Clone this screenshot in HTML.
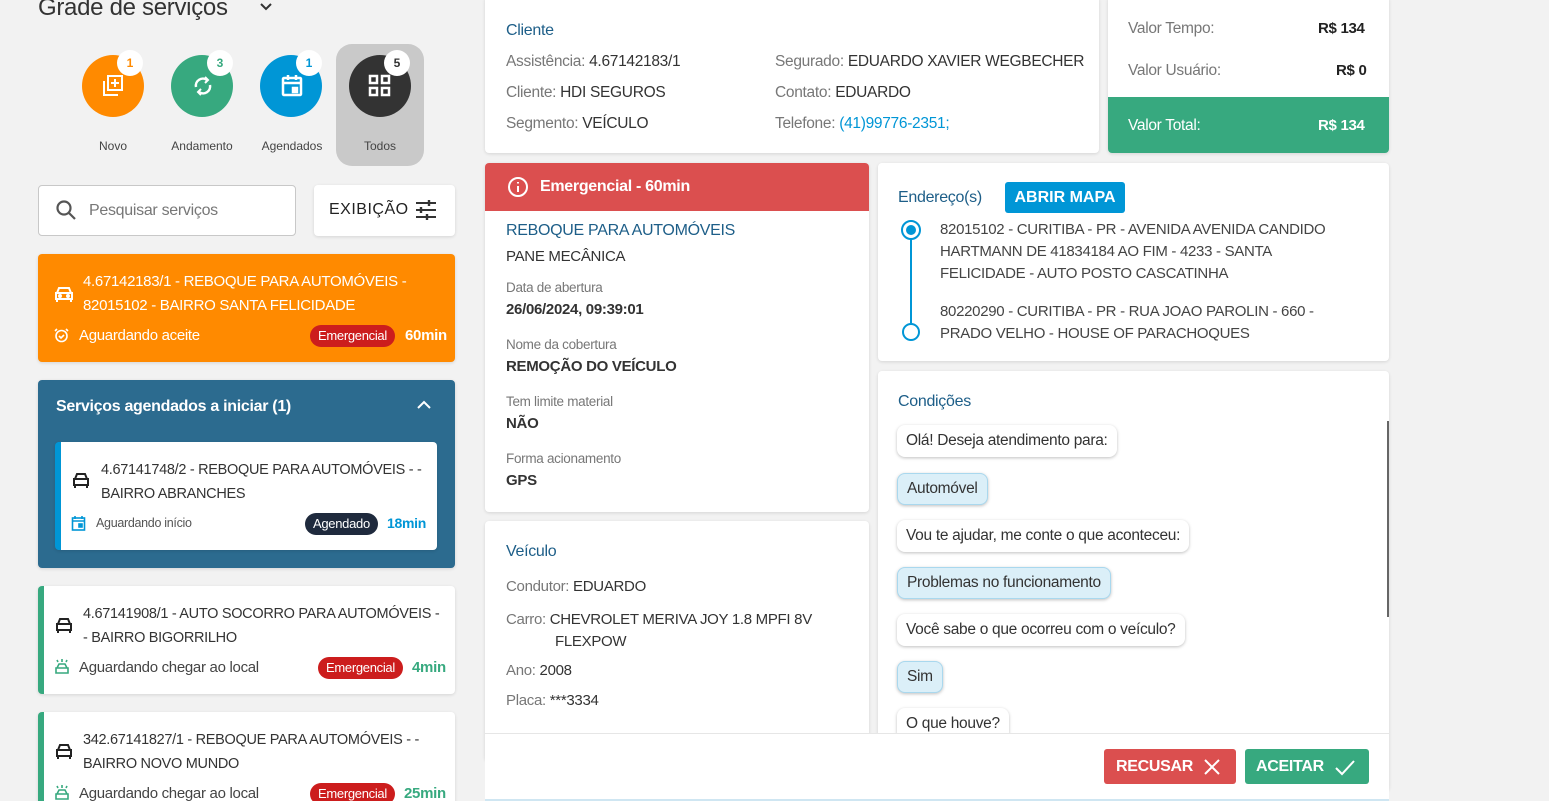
<!DOCTYPE html>
<html style="overflow:hidden;width:1549px;height:801px"><head><meta charset="utf-8"><style>
*{box-sizing:border-box;margin:0;padding:0}
body{width:1549px;height:801px;background:#f2f2f2;font-family:"Liberation Sans",sans-serif;color:#333;position:relative;overflow:hidden;font-size:15px}
.a{position:absolute}
.card{position:absolute;background:#fff;border-radius:4px;box-shadow:0 1px 3px rgba(0,0,0,.12)}
.circ{position:absolute;width:62px;height:62px;border-radius:50%;top:55px}
.badge{position:absolute;width:26px;height:26px;border-radius:50%;background:#fff;top:50px;font-size:12px;font-weight:bold;text-align:center;line-height:26px}
.lbl{position:absolute;top:139px;font-size:12px;color:#444;width:90px;text-align:center}
.t{position:absolute;white-space:nowrap;letter-spacing:-0.3px}
.g{color:#777}
.h{color:#1d5e88;font-size:16px}
.pill{position:absolute;height:22px;border-radius:11px;color:#fff;font-size:13px;line-height:22px;padding:0 8px;letter-spacing:-0.3px}
.bub{position:absolute;left:897px;height:32px;border-radius:8px;background:#fff;box-shadow:0 1px 3px rgba(0,0,0,.25);font-size:15.5px;line-height:32px;padding:0 9px;color:#333;white-space:nowrap;letter-spacing:-0.3px}
.bub.b{background:#dbeff8;border:1px solid #a9d8ee;line-height:30px}
</style></head><body>

<div class="t" style="left:38px;top:-6px;font-size:24px;color:#333">Grade de serviços</div>
<svg class="a" style="left:258px;top:1px" width="16" height="12"><path d="M3 3l5 5 5-5" stroke="#333" stroke-width="2" fill="none"/></svg>

<div class="a" style="left:336px;top:44px;width:88px;height:122px;background:#c9c9c9;border-radius:16px"></div>
<div class="circ" style="left:82px;background:#ff8a00"></div>
<div class="circ" style="left:171px;background:#37a97f"></div>
<div class="circ" style="left:260px;background:#0096d6"></div>
<div class="circ" style="left:349px;background:#333"></div>
<svg class="a" style="left:100px;top:73px" width="26" height="26" fill="none" stroke="#fff" stroke-width="2"><rect x="8" y="3" width="14" height="14"/><path d="M4 8v14h14M15 6v8M11 10h8"/></svg>
<svg class="a" style="left:190px;top:73px" width="26" height="26" fill="none" stroke="#fff" stroke-width="2.5"><path d="M6 14a7 7 0 0 1 11-7M20 12a7 7 0 0 1-11 7"/><path d="M15 4l3 3-3 3M11 16l-3 3 3 3" stroke-width="2"/></svg>
<svg class="a" style="left:279px;top:73px" width="26" height="26" fill="none" stroke="#fff" stroke-width="2.5"><rect x="4" y="5" width="18" height="17" rx="1"/><path d="M4 10h18M9 2v5M17 2v5"/><rect x="14" y="15" width="4" height="4" fill="#fff"/></svg>
<svg class="a" style="left:368px;top:74px" width="24" height="24" fill="none" stroke="#fff" stroke-width="2.5"><rect x="2" y="2" width="7" height="7"/><rect x="14" y="2" width="7" height="7"/><rect x="2" y="14" width="7" height="7"/><rect x="14" y="14" width="7" height="7"/></svg>
<div class="badge" style="left:117px;color:#ff8a00">1</div>
<div class="badge" style="left:207px;color:#37a97f">3</div>
<div class="badge" style="left:296px;color:#0096d6">1</div>
<div class="badge" style="left:384px;color:#333">5</div>
<div class="lbl" style="left:68px">Novo</div>
<div class="lbl" style="left:157px">Andamento</div>
<div class="lbl" style="left:247px">Agendados</div>
<div class="lbl" style="left:335px">Todos</div>

<div class="a" style="left:38px;top:185px;width:258px;height:51px;border:1px solid #c8c8c8;border-radius:4px;background:#fff"></div>
<svg class="a" style="left:55px;top:199px" width="22" height="22" fill="none" stroke="#555" stroke-width="2.2"><circle cx="9" cy="9" r="6.5"/><path d="M14 14l6 6"/></svg>
<div class="t" style="left:89px;top:202px;font-size:16px;color:#777">Pesquisar serviços</div>
<div class="card" style="left:314px;top:185px;width:141px;height:51px"></div>
<div class="t" style="left:329px;top:201px;font-size:16px;color:#222;letter-spacing:0.5px">EXIBIÇÃO</div>
<svg class="a" style="left:415px;top:199px" width="22" height="22" stroke="#333" stroke-width="2"><path d="M1 4h20M1 11h20M1 18h20"/><path d="M14 1v6M6 8v6M12 15v6" stroke-width="2.4"/></svg>

<div class="card" style="left:38px;top:254px;width:417px;height:108px;background:#ff8a00"></div>
<svg class="a" style="left:54px;top:285px" width="20" height="18" fill="none" stroke="#fff" stroke-width="2"><path d="M3 8l2-5h10l2 5M2 8h16v6H2zM3 14v3M17 14v3"/><circle cx="6" cy="11" r="1" fill="#fff"/><circle cx="14" cy="11" r="1" fill="#fff"/></svg>
<div class="t" style="left:83px;top:270px;color:#fff;line-height:24px">4.67142183/1 - REBOQUE PARA AUTOMÓVEIS -<br>82015102 - BAIRRO SANTA FELICIDADE</div>
<svg class="a" style="left:54px;top:328px" width="15" height="15" fill="none" stroke="#fff" stroke-width="1.6"><circle cx="7.5" cy="8" r="5.5"/><path d="M5 8l2 2 3-3M1 3l2-2M14 3l-2-2"/></svg>
<div class="t" style="left:79px;top:327px;color:#fff">Aguardando aceite</div>
<div class="pill" style="left:310px;top:325px;background:#cc1d1d">Emergencial</div>
<div class="t" style="left:405px;top:327px;color:#fff;font-weight:bold">60min</div>

<div class="card" style="left:38px;top:380px;width:417px;height:188px;background:#2c6b8f"></div>
<div class="t" style="left:56px;top:398px;color:#fff;font-size:16px;font-weight:bold">Serviços agendados a iniciar (1)</div>
<svg class="a" style="left:416px;top:399px" width="16" height="12"><path d="M2 9l6-6 6 6" stroke="#fff" stroke-width="2" fill="none"/></svg>
<div class="card" style="left:55px;top:442px;width:382px;height:108px;border-left:6px solid #0096d6"></div>
<svg class="a" style="left:72px;top:472px" width="18" height="17" fill="none" stroke="#222" stroke-width="2"><path d="M3 7l2-5h8l2 5M2 7h14v6H2zM3 13v3M15 13v3"/></svg>
<div class="t" style="left:101px;top:458px;color:#333;line-height:24px;font-size:14.5px">4.67141748/2 - REBOQUE PARA AUTOMÓVEIS - -<br>BAIRRO ABRANCHES</div>
<svg class="a" style="left:71px;top:515px" width="15" height="16" fill="none" stroke="#0096d6" stroke-width="1.6"><rect x="1.5" y="3" width="12" height="12"/><path d="M1.5 6h12M4 1v3M11 1v3"/><rect x="8" y="9" width="3" height="3" fill="#0096d6"/></svg>
<div class="t" style="left:96px;top:516px;font-size:12.5px;color:#555">Aguardando início</div>
<div class="pill" style="left:305px;top:513px;background:#1f2a3d">Agendado</div>
<div class="t" style="left:387px;top:515px;color:#0096d6;font-weight:bold;font-size:14px">18min</div>

<div class="card" style="left:38px;top:586px;width:417px;height:108px;border-left:6px solid #37a97f"></div>
<svg class="a" style="left:55px;top:617px" width="18" height="17" fill="none" stroke="#222" stroke-width="2"><path d="M3 7l2-5h8l2 5M2 7h14v6H2zM3 13v3M15 13v3"/></svg>
<div class="t" style="left:83px;top:602px;color:#333;line-height:24px;font-size:14.5px">4.67141908/1 - AUTO SOCORRO PARA AUTOMÓVEIS -<br>- BAIRRO BIGORRILHO</div>
<svg class="a" style="left:54px;top:658px" width="16" height="18" fill="none" stroke="#37a97f" stroke-width="1.6"><path d="M3 10l2-4h6l2 4M2 10h12v5H2zM8 1v3M3 2l1 2M13 2l-1 2"/></svg>
<div class="t" style="left:79px;top:659px;color:#444">Aguardando chegar ao local</div>
<div class="pill" style="left:318px;top:657px;background:#cc1d1d">Emergencial</div>
<div class="t" style="left:412px;top:659px;color:#37a97f;font-weight:bold">4min</div>

<div class="card" style="left:38px;top:712px;width:417px;height:108px;border-left:6px solid #37a97f"></div>
<svg class="a" style="left:55px;top:743px" width="18" height="17" fill="none" stroke="#222" stroke-width="2"><path d="M3 7l2-5h8l2 5M2 7h14v6H2zM3 13v3M15 13v3"/></svg>
<div class="t" style="left:83px;top:728px;color:#333;line-height:24px;font-size:14.5px">342.67141827/1 - REBOQUE PARA AUTOMÓVEIS - -<br>BAIRRO NOVO MUNDO</div>
<svg class="a" style="left:54px;top:784px" width="16" height="18" fill="none" stroke="#37a97f" stroke-width="1.6"><path d="M3 10l2-4h6l2 4M2 10h12v5H2zM8 1v3M3 2l1 2M13 2l-1 2"/></svg>
<div class="t" style="left:79px;top:785px;color:#444">Aguardando chegar ao local</div>
<div class="pill" style="left:310px;top:783px;background:#cc1d1d">Emergencial</div>
<div class="t" style="left:404px;top:785px;color:#37a97f;font-weight:bold">25min</div>

<!-- Cliente -->
<div class="card" style="left:485px;top:-4px;width:614px;height:157px"></div>
<div class="t h" style="left:506px;top:22px">Cliente</div>
<div class="t" style="left:506px;top:46px;line-height:31px;font-size:15.5px"><span class="g">Assistência:</span> 4.67142183/1<br><span class="g">Cliente:</span> HDI SEGUROS<br><span class="g">Segmento:</span> VEÍCULO</div>
<div class="t" style="left:775px;top:46px;line-height:31px;font-size:15.5px"><span class="g">Segurado:</span> EDUARDO XAVIER WEGBECHER<br><span class="g">Contato:</span> EDUARDO<br><span class="g">Telefone:</span> <span style="color:#0096d6">(41)99776-2351;</span></div>

<!-- Valor -->
<div class="card" style="left:1108px;top:-4px;width:281px;height:157px;overflow:hidden"><div class="a" style="left:0;top:101px;width:281px;height:56px;background:#37a97f"></div></div>
<div class="t g" style="left:1128px;top:20px;font-size:15.5px">Valor Tempo:</div>
<div class="t" style="left:1318px;top:20px;font-weight:bold;color:#222">R$ 134</div>
<div class="t g" style="left:1128px;top:62px;font-size:15.5px">Valor Usuário:</div>
<div class="t" style="left:1336px;top:62px;font-weight:bold;color:#222">R$ 0</div>
<div class="t" style="left:1128px;top:117px;color:#fff;font-size:15.5px">Valor Total:</div>
<div class="t" style="left:1318px;top:117px;color:#fff;font-weight:bold">R$ 134</div>

<!-- Emergencial card -->
<div class="card" style="left:485px;top:163px;width:384px;height:349px;overflow:hidden"><div style="height:48px;background:#db4f4f"></div></div>
<svg class="a" style="left:507px;top:176px" width="22" height="22" fill="none" stroke="#fff" stroke-width="2"><circle cx="11" cy="11" r="9"/><path d="M11 10v6M11 6v1.5"/></svg>
<div class="t" style="left:540px;top:178px;color:#fff;font-weight:bold;font-size:16px">Emergencial - 60min</div>
<div class="t" style="left:506px;top:222px;color:#1d5e88;font-size:16px">REBOQUE PARA AUTOMÓVEIS</div>
<div class="t" style="left:506px;top:248px">PANE MECÂNICA</div>
<div class="t g" style="left:506px;top:280px;font-size:13.5px">Data de abertura</div>
<div class="t" style="left:506px;top:301px;font-weight:bold;color:#333">26/06/2024, 09:39:01</div>
<div class="t g" style="left:506px;top:337px;font-size:13.5px">Nome da cobertura</div>
<div class="t" style="left:506px;top:358px;font-weight:bold;color:#333">REMOÇÃO DO VEÍCULO</div>
<div class="t g" style="left:506px;top:394px;font-size:13.5px">Tem limite material</div>
<div class="t" style="left:506px;top:415px;font-weight:bold;color:#333">NÃO</div>
<div class="t g" style="left:506px;top:451px;font-size:13.5px">Forma acionamento</div>
<div class="t" style="left:506px;top:472px;font-weight:bold;color:#333">GPS</div>

<!-- Veiculo -->
<div class="card" style="left:485px;top:521px;width:384px;height:240px"></div>
<div class="t h" style="left:506px;top:543px">Veículo</div>
<div class="t" style="left:506px;top:578px"><span class="g">Condutor:</span> EDUARDO</div>
<div class="t" style="left:506px;top:609px;line-height:22px"><span class="g">Carro:</span> CHEVROLET MERIVA JOY 1.8 MPFI 8V<br><span style="padding-left:49px">FLEXPOW</span></div>
<div class="t" style="left:506px;top:662px"><span class="g">Ano:</span> 2008</div>
<div class="t" style="left:506px;top:692px"><span class="g">Placa:</span> ***3334</div>

<!-- Endereço -->
<div class="card" style="left:878px;top:163px;width:511px;height:198px"></div>
<div class="t h" style="left:898px;top:189px">Endereço(s)</div>
<div class="a" style="left:1005px;top:182px;width:120px;height:31px;background:#0096d6;border-radius:3px;color:#fff;font-weight:bold;font-size:16px;text-align:center;line-height:31px">ABRIR MAPA</div>
<svg class="a" style="left:898px;top:217px" width="26" height="126" fill="none" stroke="#0096d6" stroke-width="2"><circle cx="13" cy="13" r="9"/><circle cx="13" cy="13" r="5" fill="#0096d6" stroke="none"/><path d="M13 22v84"/><circle cx="13" cy="115" r="8"/></svg>
<div class="t" style="left:940px;top:219px;line-height:22px;color:#444">82015102 - CURITIBA - PR - AVENIDA AVENIDA CANDIDO<br>HARTMANN DE 41834184 AO FIM - 4233 - SANTA<br>FELICIDADE - AUTO POSTO CASCATINHA</div>
<div class="t" style="left:940px;top:301px;line-height:22px;color:#444">80220290 - CURITIBA - PR - RUA JOAO PAROLIN - 660 -<br>PRADO VELHO - HOUSE OF PARACHOQUES</div>

<!-- Condições -->
<div class="card" style="left:878px;top:371px;width:511px;height:420px"></div>
<div class="t h" style="left:898px;top:393px">Condições</div>
<div class="a" style="left:1387px;top:421px;width:2px;height:196px;background:#666"></div>
<div class="bub" style="top:425px">Olá! Deseja atendimento para:</div>
<div class="bub b" style="top:473px">Automóvel</div>
<div class="bub" style="top:520px">Vou te ajudar, me conte o que aconteceu:</div>
<div class="bub b" style="top:567px">Problemas no funcionamento</div>
<div class="bub" style="top:614px">Você sabe o que ocorreu com o veículo?</div>
<div class="bub b" style="top:661px">Sim</div>
<div class="bub" style="top:708px">O que houve?</div>

<!-- Footer -->
<div class="a" style="left:485px;top:733px;width:904px;height:68px;background:#fff;border-top:1px solid #e6e6e6;border-bottom:2px solid #cfe6f2"></div>
<div class="a" style="left:1104px;top:749px;width:132px;height:35px;background:#db4f4f;border-radius:3px"></div>
<div class="t" style="left:1116px;top:758px;color:#fff;font-weight:bold;font-size:16px">RECUSAR</div>
<svg class="a" style="left:1203px;top:758px" width="18" height="18" stroke="#fff" stroke-width="2"><path d="M2 2l14 14M16 2L2 16"/></svg>
<div class="a" style="left:1245px;top:749px;width:124px;height:35px;background:#37a97f;border-radius:3px"></div>
<div class="t" style="left:1256px;top:758px;color:#fff;font-weight:bold;font-size:16px">ACEITAR</div>
<svg class="a" style="left:1334px;top:758px" width="22" height="18" fill="none" stroke="#fff" stroke-width="2"><path d="M2 10l6 6L20 3"/></svg>
</body></html>
